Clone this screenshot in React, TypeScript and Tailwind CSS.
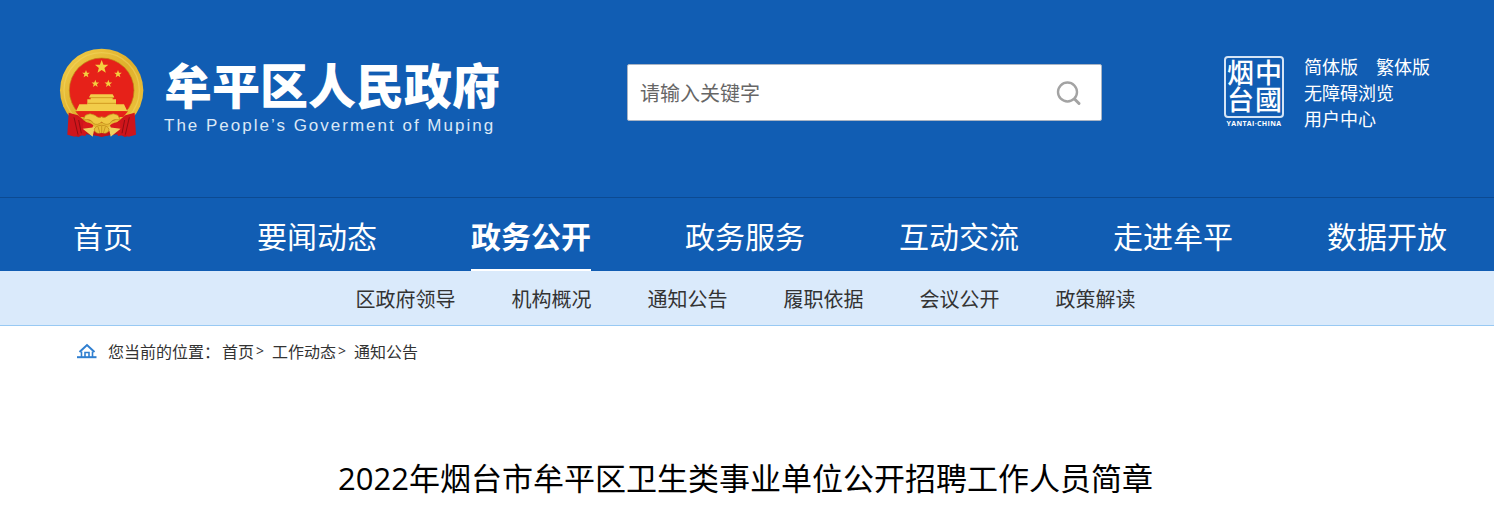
import React from 'react'

interface LinkItem {
  label: string
  href: string
}

interface NavItem extends LinkItem {
  active?: boolean
}

const NAV_ITEMS: NavItem[] = [
  { label: '首页', href: '#home' },
  { label: '要闻动态', href: '#news' },
  { label: '政务公开', href: '#affairs', active: true },
  { label: '政务服务', href: '#service' },
  { label: '互动交流', href: '#interact' },
  { label: '走进牟平', href: '#about' },
  { label: '数据开放', href: '#data' }
]

const SUB_NAV_ITEMS: LinkItem[] = [
  { label: '区政府领导', href: '#leaders' },
  { label: '机构概况', href: '#organization' },
  { label: '通知公告', href: '#notice' },
  { label: '履职依据', href: '#basis' },
  { label: '会议公开', href: '#meeting' },
  { label: '政策解读', href: '#policy' }
]

const BREADCRUMB: LinkItem[] = [
  { label: '首页', href: '#home' },
  { label: '工作动态', href: '#work' },
  { label: '通知公告', href: '#notice' }
]

const STAR = '0,-10 2.6,-3.2 9.5,-3.1 4,1.4 5.9,8.1 0,4.2 -5.9,8.1 -4,1.4 -9.5,-3.1 -2.6,-3.2'

// National emblem
const Emblem: React.FC = () => (
  <svg viewBox="27 24 255 270" className="h-[90px] w-[85px] shrink-0" aria-hidden="true">
    <defs>
      <linearGradient id="gold" x1="0" y1="0" x2="1" y2="1">
        <stop offset="0" stopColor="#f3cf4c" />
        <stop offset="0.5" stopColor="#dfb02c" />
        <stop offset="1" stopColor="#f0c63f" />
      </linearGradient>
    </defs>
    <path d="M64 214 L58 284 L86 291 L102 282 L155 289 L208 282 L224 291 L251 284 L246 214 Z" fill="#c3121a" />
    <circle cx="155" cy="151" r="125" fill="url(#gold)" />
    <circle cx="155" cy="151" r="113" fill="none" stroke="#f4d862" strokeWidth="4" opacity="0.5" />
    <circle cx="155" cy="151" r="97" fill="#e62119" stroke="#b98514" strokeWidth="2" />
    <g fill="#f4d03f">
      <polygon points={STAR} transform="translate(155 81) scale(2.1)" />
      <polygon points={STAR} transform="translate(108 102) scale(1.2)" />
      <polygon points={STAR} transform="translate(204 102) scale(1.2)" />
      <polygon points={STAR} transform="translate(136 131) scale(1.2)" />
      <polygon points={STAR} transform="translate(175 131) scale(1.2)" />
    </g>
    {/* gate tower */}
    <path
      d="M122 163 H188 L193 172 H188 V178 H198 V193 H222 L232 214 H78 L88 193 H112 V178 H122 V172 H117 Z"
      fill="#f2cd4a"
    />
    <path d="M118 173 H192 M112 190 H198" stroke="#d29c22" strokeWidth="3" />
    <path d="M76 214 H234 L220 231 H90 Z" fill="#e62119" />
    {/* ribbon */}
    <path d="M56 218 L84 226 L108 246 L118 256 L106 288 L84 284 L74 290 L52 284 Z" fill="#cf151b" />
    <path d="M254 218 L226 226 L202 246 L192 256 L204 288 L226 284 L236 290 L258 284 Z" fill="#cf151b" />
    <path d="M72 232 L84 284 M86 240 L94 280 M238 232 L226 284 M224 240 L216 280" stroke="#8f0d12" strokeWidth="3" fill="none" />
    <path
      d="M106 226 Q120 217 135 226 Q146 237 155 230 Q164 237 175 226 Q190 217 204 226 L210 240 Q188 234 180 250 Q168 258 155 246 Q142 258 130 250 Q122 234 100 240 Z"
      fill="#f0c842"
      stroke="#bd8a18"
      strokeWidth="2"
    />
    <path d="M100 246 Q118 246 130 256 L124 272 Q106 270 98 262 Z" fill="#d91a1c" />
    <path d="M210 246 Q192 246 180 256 L186 272 Q204 270 212 262 Z" fill="#d91a1c" />
    <path d="M98 266 L134 262 L128 290 Z M212 266 L176 262 L182 290 Z" fill="#f0d060" />
    <ellipse cx="155" cy="269" rx="22" ry="13" fill="#e9bd38" stroke="#b98514" strokeWidth="2" />
    <path d="M155 258 V280 M144 260 L150 280 M166 260 L160 280" stroke="#b98514" strokeWidth="2" />
    <path d="M128 284 L155 279 L182 284 L155 291 Z" fill="#c3121a" />
  </svg>
)

// City seal: set vertically, right column first, as on a carved stamp
const CitySeal: React.FC = () => (
  <a href="#yantai" className="flex w-[60px] shrink-0 flex-col items-center text-white">
    <span className="flex h-[62px] w-full items-center justify-center rounded-[4px] border-2 border-[#d5e4f5] text-[27px] leading-[28px] font-medium [writing-mode:vertical-rl]">
      <span className="h-[56px]">
        中國
        <br />
        烟台
      </span>
    </span>
    <span className="mt-px font-['Open_Sans',sans-serif] text-[7px] leading-[10px] font-bold tracking-wider whitespace-nowrap">
      YANTAI·CHINA
    </span>
  </a>
)

const SearchBox: React.FC = () => (
  <form role="search" className="flex h-[57px] items-center rounded-[2px] border border-[#a9b4c4] bg-white" onSubmit={e => e.preventDefault()}>
    <input
      type="text"
      aria-label="请输入关键字"
      placeholder="请输入关键字"
      className="h-full min-w-0 flex-1 bg-transparent px-3 text-[20px] text-[#333] outline-none placeholder:text-[#666]"
    />
    <button type="submit" aria-label="搜索" className="mr-[19px]">
      <svg viewBox="0 0 26 26" className="h-[26px] w-[26px]" fill="none" stroke="#a3a3a3" strokeLinecap="round">
        <circle cx="11.5" cy="12" r="9.5" strokeWidth="2.4" />
        <path d="M18.5 19 L23 23.5" strokeWidth="3" />
      </svg>
    </button>
  </form>
)

const Header: React.FC = () => (
  <header className="bg-[#115db3] text-white">
    <div className="grid h-[197px] grid-cols-[568fr_475fr_392fr] pt-12 pl-[59px]">
      <a href="#home" className="flex items-start gap-5">
        <Emblem />
        <span className="pt-1 whitespace-nowrap">
          <span className="block text-[48px] leading-[62px] font-black">牟平区人民政府</span>
          <span className="block font-['Liberation_Sans',Arial,sans-serif] text-[17px] leading-6 tracking-[2px] text-[#dbe8f6]">
            The People’s Goverment of Muping
          </span>
        </span>
      </a>
      <div className="pt-4">
        <SearchBox />
      </div>
      <div className="flex items-start justify-end gap-5 pt-2 pr-16">
        <CitySeal />
        <div className="-mt-[3px] text-[18px] leading-[26px] whitespace-nowrap">
          <div className="flex gap-[18px]">
            <a href="#simplified">简体版</a>
            <a href="#traditional">繁体版</a>
          </div>
          <a href="#accessible" className="block">无障碍浏览</a>
          <a href="#user" className="block">用户中心</a>
        </div>
      </div>
    </div>

    <nav aria-label="主导航" className="border-t border-[#0c4a92]">
      <ul className="-ml-1 grid grid-cols-7">
        {NAV_ITEMS.map(item => (
          <li key={item.label} className="flex justify-center">
            <a
              href={item.href}
              className={`block h-[73px] border-b-2 text-[30px] leading-[74px] whitespace-nowrap ${
                item.active ? 'border-white font-bold' : 'border-transparent'
              }`}
            >
              {item.label}
            </a>
          </li>
        ))}
      </ul>
    </nav>
  </header>
)

const SubNav: React.FC = () => (
  <nav aria-label="二级导航" className="border-b border-[#98c9f3] bg-[#daeafb] pr-[3px]">
    <ul className="flex h-[54px] justify-center gap-14 text-[20px] leading-[56px] text-[#333]">
      {SUB_NAV_ITEMS.map(item => (
        <li key={item.label}>
          <a href={item.href}>{item.label}</a>
        </li>
      ))}
    </ul>
  </nav>
)

const Breadcrumb: React.FC = () => (
  <div className="flex items-center pt-[13px] pl-[77px] text-[16px] leading-6 text-[#333]">
    <svg viewBox="0 0 20 16" className="mr-[11px] h-4 w-5" fill="none" stroke="#2f7fd0" aria-hidden="true">
      <path d="M2.5 9 L10 2 L17.5 9" strokeWidth="2" />
      <path d="M4.5 8.5 V14 M15.5 8.5 V14" strokeWidth="1.6" />
      <path d="M8 14 V9.5 H12 V14" strokeWidth="1.6" />
      <path d="M0 14.2 H19.5" strokeWidth="2" />
    </svg>
    <span className="mr-0.5">您当前的位置：</span>
    {BREADCRUMB.map((item, index) => (
      <React.Fragment key={item.label}>
        {index > 0 && <span className="mr-2 ml-0.5 font-['Open_Sans',sans-serif] text-[14px]">&gt;</span>}
        <a href={item.href}>{item.label}</a>
      </React.Fragment>
    ))}
  </div>
)

const App: React.FC = () => (
  <div className="bg-white font-['Noto_Sans_CJK_SC',sans-serif]">
    <Header />
    <SubNav />
    <main>
      <Breadcrumb />
      <h1 className="pt-[91px] pr-[3px] text-center font-['Open_Sans','Noto_Sans_CJK_SC',sans-serif] text-[31px] leading-[48px] text-black">
        2022年烟台市牟平区卫生类事业单位公开招聘工作人员简章
      </h1>
    </main>
  </div>
)

export default App
